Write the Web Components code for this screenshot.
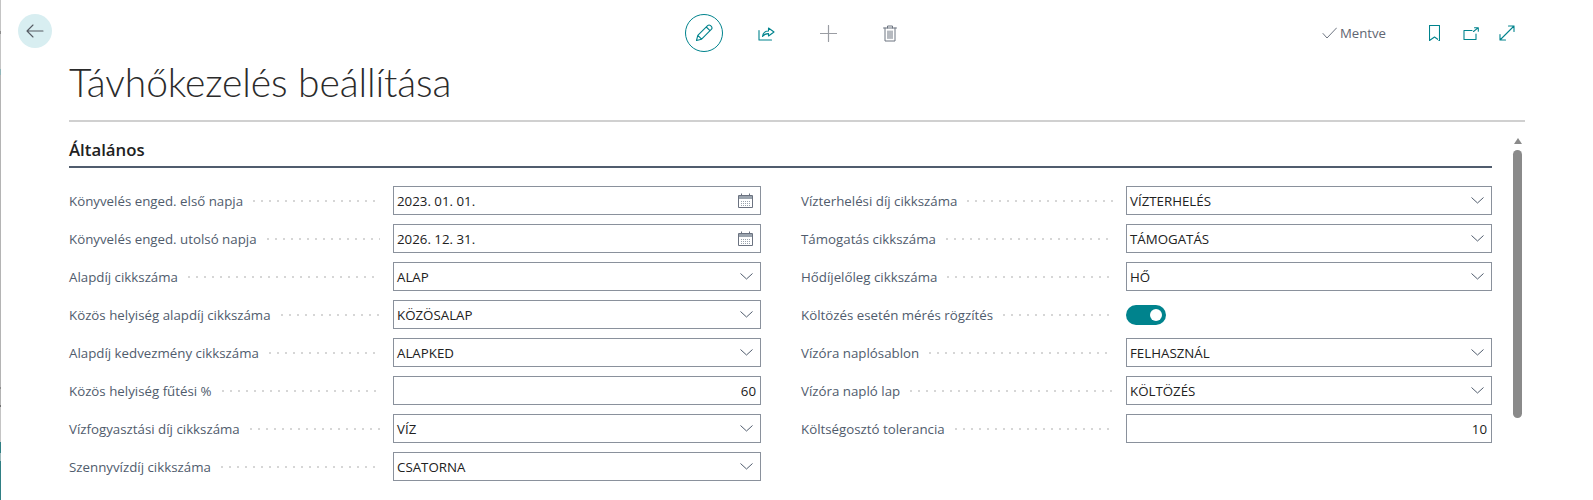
<!DOCTYPE html>
<html lang="hu">
<head>
<meta charset="utf-8">
<title>Távhőkezelés beállítása</title>
<style>
  html, body { margin: 0; height: 100%; background: #fff; overflow: hidden; }
  body { font-family: "Open Sans", "Noto Sans", sans-serif; color: #212121; }
</style>
</head>
<body>
<bc-page>
  <bc-toolbar slot="toolbar"></bc-toolbar>
  <h-title slot="title">Távhőkezelés beállítása</h-title>
  <bc-section slot="body" caption="Általános">
    <div slot="left" style="--ctl:368px">
      <bc-field label="Könyvelés enged. első napja" value="2023. 01. 01." kind="date"></bc-field>
      <bc-field label="Könyvelés enged. utolsó napja" value="2026. 12. 31." kind="date"></bc-field>
      <bc-field label="Alapdíj cikkszáma" value="ALAP" kind="select"></bc-field>
      <bc-field label="Közös helyiség alapdíj cikkszáma" value="KÖZÖSALAP" kind="select"></bc-field>
      <bc-field label="Alapdíj kedvezmény cikkszáma" value="ALAPKED" kind="select"></bc-field>
      <bc-field label="Közös helyiség fűtési %" value="60" kind="number"></bc-field>
      <bc-field label="Vízfogyasztási díj cikkszáma" value="VÍZ" kind="select"></bc-field>
      <bc-field label="Szennyvízdíj cikkszáma" value="CSATORNA" kind="select"></bc-field>
    </div>
    <div slot="right" style="--ctl:366px">
      <bc-field label="Vízterhelési díj cikkszáma" value="VÍZTERHELÉS" kind="select"></bc-field>
      <bc-field label="Támogatás cikkszáma" value="TÁMOGATÁS" kind="select"></bc-field>
      <bc-field label="Hődíjelőleg cikkszáma" value="HŐ" kind="select"></bc-field>
      <bc-field label="Költözés esetén mérés rögzítés" kind="toggle"></bc-field>
      <bc-field label="Vízóra naplósablon" value="FELHASZNÁL" kind="select"></bc-field>
      <bc-field label="Vízóra napló lap" value="KÖLTÖZÉS" kind="select"></bc-field>
      <bc-field label="Költségosztó tolerancia" value="10" kind="number"></bc-field>
    </div>
  </bc-section>
</bc-page>
<script>
const TEAL = '#00838d';

class BcPage extends HTMLElement {
  constructor() {
    super();
    this.attachShadow({ mode: 'open' }).innerHTML = `
      <style>
        :host { display: block; height: 500px; box-sizing: border-box; overflow: hidden;
                border-left: 1px solid #bdbdbd;
                border-image: linear-gradient(to bottom, #c4c4c4 0, #c4c4c4 32px, #8c8c8c 32px, #8c8c8c 35px,
                  #c4c4c4 35px, #c4c4c4 70px, #8fb5b8 70px, #8fb5b8 76px, #b4b4b4 76px, #b4b4b4 386px,
                  #8c8c8c 386px, #8c8c8c 388px, #b4b4b4 388px, #b4b4b4 404px, #707070 404px, #707070 406px,
                  #c4c4c4 406px, #c4c4c4 441px, #2f7f84 441px, #2f7f84 452px, #9db8ba 452px, #9db8ba 460px,
                  #2f7f84 460px, #2f7f84 500px) 1; }
        .head { padding-left: 68px; padding-right: 68px; }
        .rule { height: 2px; background: #d0d0d0; margin-top: 15px; }
        .body { display: flex; padding-left: 68px; }
      </style>
      <slot name="toolbar"></slot>
      <div class="head">
        <slot name="title"></slot>
        <div class="rule"></div>
      </div>
      <div class="body"><slot name="body"></slot><bc-scroll></bc-scroll></div>`;
  }
}

class BcToolbar extends HTMLElement {
  constructor() {
    super();
    this.attachShadow({ mode: 'open' }).innerHTML = `
      <style>
        :host { display: flex; align-items: center; height: 38px; margin-top: 14px; margin-bottom: 8px;
                padding: 0 78px 0 17px; }
        button { all: unset; display: flex; align-items: center; justify-content: center; }
        svg { display: block; fill: none; stroke-linecap: round; stroke-linejoin: round; }
        .back { width: 34px; height: 34px; border-radius: 50%; background: #d8eef1; align-self: flex-start; margin-right: 633px; }
        .edit { width: 38px; height: 38px; border: 1px solid ${TEAL}; border-radius: 50%; box-sizing: border-box; margin-right: 35px; }
        .share { margin-right: 45px; }
        .plus { margin-right: 46px; }
        .saved { display: flex; align-items: center; gap: 3px; font-size: 13.2px; color: #5f6672; margin-left: auto; margin-right: 43px; }
        .mark { margin-right: 23px; }
        .out { margin-right: 20px; }
      </style>
      <button class="back" aria-label="Vissza">
        <svg width="18" height="14" viewBox="0 0 18 14" stroke="#555b63" stroke-width="1.1"><path d="M1 7H17M7 1L1 7L7 13"/></svg>
      </button>
      <button class="edit" aria-label="Szerkesztés">
        <svg width="18" height="18" viewBox="0 0 18 18" stroke="${TEAL}" stroke-width="1.1"><path d="M1.5 16.5L2.8 11.4L12.6 1.7C13.4 .9 14.7 .9 15.6 1.7L16.3 2.4C17.1 3.3 17.1 4.6 16.3 5.4L6.6 15.2ZM2.8 11.4L6.6 15.2M11.3 3L15 6.7"/></svg>
      </button>
      <button class="share" aria-label="Megosztás">
        <svg width="17" height="15" viewBox="0 0 17 15" stroke="${TEAL}" stroke-width="1.1"><path d="M1 4.5V14H13.5M4.5 10.5C5 7 7.5 5 10.5 5V2L16 6L10.5 10V7.6C8 7.5 6 8.5 4.5 10.5Z"/></svg>
      </button>
      <button class="plus" aria-label="Új">
        <svg width="17" height="17" viewBox="0 0 17 17" stroke="#9a9da3" stroke-width="1.2"><path d="M8.5 .5V16.5M.5 8.5H16.5"/></svg>
      </button>
      <button aria-label="Törlés">
        <svg width="14" height="17" viewBox="0 0 14 17" stroke="#6d7480" stroke-width="1"><path d="M.5 3H13.5M4.5 3V1H9.5V3M2 3V16H12V3M5 6V13.5M7 6V13.5M9 6V13.5"/></svg>
      </button>
      <span class="saved">
        <svg width="15" height="12" viewBox="0 0 15 12" stroke="#6d7480" stroke-width="1"><path d="M1 6.5L5 11L14.5 1"/></svg>
        Mentve
      </span>
      <button class="mark" aria-label="Könyvjelző">
        <svg width="11" height="16" viewBox="0 0 11 16" stroke="${TEAL}" stroke-width="1.1"><path d="M.5 .5H10.5V15.5L5.5 12L.5 15.5Z"/></svg>
      </button>
      <button class="out" aria-label="Megnyitás">
        <svg width="16" height="13" viewBox="0 0 16 13" stroke="${TEAL}" stroke-width="1.1"><path d="M9 3.5H1V12.5H13V7M10.5 4.5L15 .8M11.5 .7H15.3V4.2"/></svg>
      </button>
      <button aria-label="Teljes méret">
        <svg width="16" height="16" viewBox="0 0 16 16" stroke="${TEAL}" stroke-width="1.1"><path d="M1 15L15 1M9.5 1H15V6.5M1 9.5V15H6.5"/></svg>
      </button>`;
  }
}

class HTitle extends HTMLElement {
  constructor() {
    super();
    this.attachShadow({ mode: 'open' }).innerHTML = `
      <style>
        :host { display: block; font: 300 39px/45px Lato, "Open Sans", sans-serif; letter-spacing: -.1px; color: #2b2b2b; }
      </style><slot></slot>`;
  }
}

class BcSection extends HTMLElement {
  constructor() {
    super();
    this.attachShadow({ mode: 'open' }).innerHTML = `
      <style>
        :host { display: block; width: 1423px; flex: none; }
        .cap { font-size: 16.8px; font-weight: 600; line-height: 22px; color: #212121; padding-top: 17px; padding-bottom: 5px;
               border-bottom: 2px solid #505c6d; }
        .cols { display: grid; grid-template-columns: 692px 691px; column-gap: 40px; padding-top: 13.5px; }
      </style>
      <div class="cap"></div>
      <div class="cols"><slot name="left"></slot><slot name="right"></slot></div>`;
    this.shadowRoot.querySelector('.cap').textContent = this.getAttribute('caption');
  }
}

class BcField extends HTMLElement {
  constructor() {
    super();
    this.attachShadow({ mode: 'open' }).innerHTML = `
      <style>
        :host { display: grid; grid-template-columns: 1fr var(--ctl); align-items: center; height: 38px; }
        .lab { display: flex; align-items: center; font-size: 13.3px; color: #505c6d; min-width: 0; padding-right: 13px; }
        .lab span { white-space: nowrap; }
        .dots { flex: 1; margin-left: 10px; height: 2px; min-width: 0;
                background: radial-gradient(circle at 1px 1px, #d6d6d6 1px, transparent 1.2px) 0 0 / 8px 2px repeat-x; }
        .box { height: 29px; box-sizing: border-box; border: 1px solid #8a919c; display: flex; align-items: center;
               padding: 0 4px 0 3px; font-size: 13.3px; color: #212121; background: #fff; }
        .val { flex: 1; white-space: nowrap; }
        .num { text-align: right; }
        svg { display: block; fill: none; flex: none; }
        .cal { margin-right: 3px; }
        .chev { margin-right: 3px; }
        .toggle { width: 40px; height: 20px; border-radius: 10px; background: ${TEAL}; display: flex; align-items: center;
                  justify-content: flex-end; padding-right: 4px; box-sizing: border-box; }
        .toggle i { width: 12px; height: 12px; border-radius: 50%; background: #fff; display: block; }
      </style>
      <div class="lab"><span class="t"></span><div class="dots"></div></div>
      <div class="ctl"></div>`;
  }
  connectedCallback() {
    const root = this.shadowRoot;
    const kind = this.getAttribute('kind');
    const value = this.getAttribute('value') || '';
    root.querySelector('.t').textContent = this.getAttribute('label');
    const ctl = root.querySelector('.ctl');
    if (kind === 'toggle') { ctl.innerHTML = '<div class="toggle"><i></i></div>'; return; }
    let icon = '';
    if (kind === 'date') icon = `<svg class="cal" width="15" height="15" viewBox="0 0 15 15" stroke="#6b7280" stroke-width="1"><path d="M.5 2.5H14.5V14.5H.5Z"/><path fill="#9aa3ad" stroke="none" d="M1 3H14V6H1Z"/><path d="M3.5 .5V2.5M11.5 .5V2.5"/><path stroke="#9aa3ad" stroke-dasharray="1 1" d="M3 8.5H12M3 10.5H12M3 12.5H12"/></svg>`;
    if (kind === 'select') icon = `<svg class="chev" width="13" height="7" viewBox="0 0 13 7" stroke="#505c6d" stroke-width="1"><path d="M.5 .5L6.5 6L12.5 .5"/></svg>`;
    ctl.innerHTML = `<div class="box"><span class="val ${kind === 'number' ? 'num' : ''}"></span>${icon}</div>`;
    ctl.querySelector('.val').textContent = value;
  }
}

class BcScroll extends HTMLElement {
  constructor() {
    super();
    this.attachShadow({ mode: 'open' }).innerHTML = `
      <style>
        :host { display: block; width: 9px; margin-left: 21px; margin-top: 16px; }
        .up { width: 0; height: 0; margin: 0 auto 6px; border: 4.5px solid transparent; border-top: 0; border-bottom: 6px solid #8a8a8a; }
        .thumb { height: 268px; background: #8a8a8a; border-radius: 4.5px; }
      </style>
      <div class="up"></div><div class="thumb"></div>`;
  }
}

customElements.define('bc-page', BcPage);
customElements.define('bc-toolbar', BcToolbar);
customElements.define('h-title', HTitle);
customElements.define('bc-section', BcSection);
customElements.define('bc-field', BcField);
customElements.define('bc-scroll', BcScroll);
</script>
</body>
</html>
